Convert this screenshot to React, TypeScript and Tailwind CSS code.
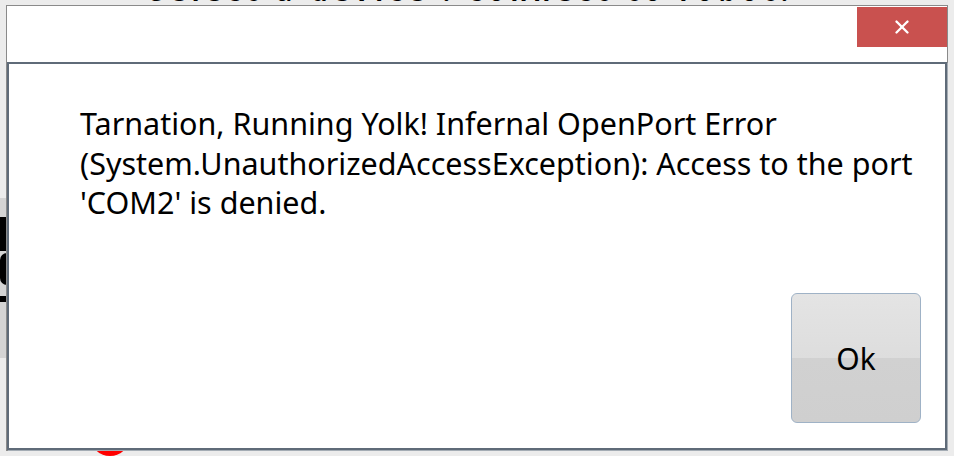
import { X } from "lucide-react";

const lines = [
  "Tarnation, Running Yolk! Infernal OpenPort Error",
  "(System.UnauthorizedAccessException): Access to the port",
  "'COM2' is denied.",
];

export default function App() {
  return (
    <div
      className="relative w-[954px] h-[456px] overflow-hidden bg-[#ececec]"
      style={{ fontFamily: '"Noto Sans", "Open Sans", sans-serif' }}
    >
      {/* page content peeking out behind the dialog */}
      <div className="absolute left-[150px] top-[-28px] whitespace-nowrap text-[26px] font-bold text-black tracking-[6px]">
        Select a device : connect to robot.
      </div>
      <div className="absolute left-0 top-[198px] w-[12px] h-[160px] bg-[#d4d4d4] flex flex-col">
        <div className="mt-[19px] h-[34px] bg-black" />
        <div className="mt-[2px] h-[32px] w-[14px] rounded-full bg-black" />
        <div className="mt-[11px] h-[6px] bg-black" />
      </div>
      <div className="absolute left-[90px] top-[416px] w-[40px] h-[40px] rounded-full bg-[#ff0000]" />

      {/* dialog */}
      <div className="absolute left-[6px] top-[5px] w-[942px] h-[446px] border border-[#8a8a8a] bg-white flex flex-col">
        <div className="h-[56px] flex justify-end items-start pt-[1px]">
          <button className="w-[90px] h-[40px] bg-[#c9514f] flex items-center justify-center text-white">
            <X size={22} strokeWidth={2.6} />
          </button>
        </div>
        <div className="flex-1 border-2 border-[#5f6b78] shadow-[1px_1px_0_#a4acb4] flex flex-col">
          <div className="pl-[71px] pt-[40px] text-[30.5px] leading-[39.5px] text-black">
            {lines.map((l) => (
              <div key={l} className="whitespace-nowrap">
                {l}
              </div>
            ))}
          </div>
          <div className="mt-auto flex justify-end pr-[24px] pb-[25px]">
            <button className="w-[130px] h-[130px] rounded-[6px] border border-[#9fb2c6] bg-[linear-gradient(#e4e4e4,#dddddd_50%,#d1d1d1_50%,#cfcfcf)] text-[30px] text-black">
              Ok
            </button>
          </div>
        </div>
      </div>
    </div>
  );
}
